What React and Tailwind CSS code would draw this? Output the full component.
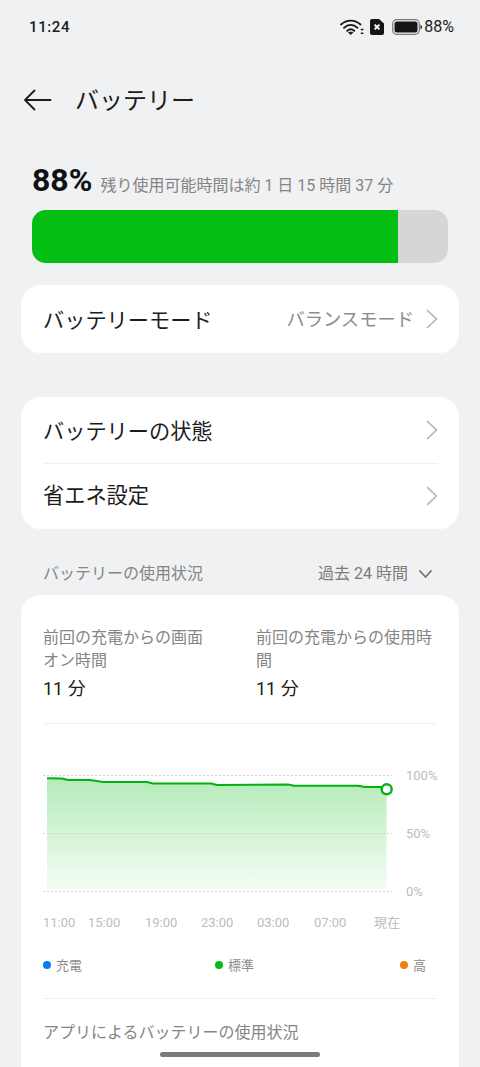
const Chevron = () => (
  <svg className="ml-[1px]" width="12" height="20" viewBox="0 0 12 20" fill="none" stroke="#b4b5b7" strokeWidth="1.7" strokeLinecap="round" strokeLinejoin="round">
    <path d="M1.5 1.5 L10.5 10 L1.5 18.5" />
  </svg>
);

const Dot = ({ color, label, className }) => (
  <div className={`flex items-center gap-[5px] ${className}`}>
    <span className={`w-2 h-2 rounded-full ${color}`} />
    <span className="text-[13px] leading-none text-[#8c8c8c]">{label}</span>
  </div>
);

const linePts = "47,778.3 62,778.5 68,780 90,780 103,782 147,782 153,783.5 211,783.5 217,785 288,784.5 294,785.7 358,785.7 365,787 386.5,787";

export default function App() {
  return (
    <div className="relative w-[480px] h-[1067px] overflow-hidden bg-[#f0f1f3] font-[family-name:Roboto,'Noto_Sans_CJK_JP',sans-serif]">
      {/* status bar */}
      <div className="h-[54px] flex items-center justify-between pl-[29px] pr-[26px]">
        <span className="text-[15px] font-medium text-[#1c1c1c] tracking-[0.6px]">11:24</span>
        <div className="flex items-center">
          <svg width="24" height="18" viewBox="0 0 24 18" fill="none" stroke="#161616" strokeWidth="1.8" strokeLinecap="round">
            <path d="M1 6.5 C6.5 1.2 15 1.2 20.5 6.5" />
            <path d="M4 9.8 C8 6 13.5 6 17.5 9.8" />
            <path d="M7.2 12.8 C9.5 10.8 12 10.8 14.3 12.8" />
            <path d="M8.8 14.6 L10.75 16.6 L12.7 14.6 Z" fill="#161616" strokeWidth="1" />
            <path d="M21.4 11.6 L22.8 11.6 M21.4 15.2 L22.8 15.2" strokeWidth="1.5" />
          </svg>
          <svg className="ml-[6px]" width="14" height="16" viewBox="0 0 14 16">
            <path d="M2 0 H9 L14 4.5 V14 Q14 16 12 16 H2 Q0 16 0 14 V2 Q0 0 2 0 Z" fill="#161616" />
            <path d="M4.6 5.6 L9.4 10.4 M9.4 5.6 L4.6 10.4" stroke="#fff" strokeWidth="2" />
          </svg>
          <svg className="ml-2" width="30" height="16" viewBox="0 0 30 16">
            <rect x="0.7" y="0.7" width="26.6" height="14.6" rx="4" fill="none" stroke="#77787a" strokeWidth="1.2" />
            <rect x="2.5" y="2.5" width="23" height="11" rx="2.5" fill="#161616" />
            <path d="M28.5 5.5 Q30 6.5 30 8 Q30 9.5 28.5 10.5 Z" fill="#161616" />
          </svg>
          <span className="ml-[2px] text-[16px] text-[#1c1c1c]">88%</span>
        </div>
      </div>

      {/* header */}
      <div className="h-[92px] flex items-center pl-[23px]">
        <svg width="29" height="22" viewBox="0 0 29 22" fill="none" stroke="#1c1c1c" strokeWidth="1.8" strokeLinecap="round" strokeLinejoin="round">
          <path d="M27.5 11 H2 M11.5 1.5 L2 11 L11.5 20.5" />
        </svg>
        <span className="ml-[23px] pt-[2px] text-[24px] leading-none text-[#1c1c1c]">バッテリー</span>
      </div>

      {/* level */}
      <div className="h-[64px] flex items-baseline px-8 pt-[14px]">
        <span className="text-[32px] leading-[40px] font-bold text-[#111111]">88%</span>
        <span className="ml-2 text-[16px] text-[#858585]">残り使用可能時間は約 1 日 15 時間 37 分</span>
      </div>
      <div className="mx-8 h-[53px] rounded-[14px] bg-[#d5d6d8] overflow-hidden">
        <div className="w-[366px] h-full bg-[#04be14]" />
      </div>

      {/* battery mode */}
      <div className="mt-[22px] mx-[21px] h-[68px] rounded-[20px] bg-white flex items-center pl-[22px] pr-[21px]">
        <span className="flex-1 pt-[3px] text-[21.2px] text-[#1c1c1c]">バッテリーモード</span>
        <span className="pt-[2px] text-[18.3px] text-[#8c8c8c] mr-[11px]">バランスモード</span>
        <Chevron />
      </div>

      {/* settings */}
      <div className="mt-[44px] mx-[21px] h-[132px] rounded-[20px] bg-white pl-[22px] pr-[21px] flex flex-col">
        <div className="flex-1 flex items-center justify-between border-b border-[#f0f0f1]">
          <span className="pt-[4px] text-[21.2px] text-[#1c1c1c]">バッテリーの状態</span>
          <Chevron />
        </div>
        <div className="flex-1 flex items-center justify-between">
          <span className="text-[21.2px] text-[#1c1c1c]">省エネ設定</span>
          <Chevron />
        </div>
      </div>

      {/* usage heading */}
      <div className="h-[66px] pt-[24px] pl-[43px] pr-[48px] flex items-center justify-between">
        <span className="text-[16px] text-[#858585]">バッテリーの使用状況</span>
        <div className="flex items-center gap-[11px]">
          <span className="text-[16px] text-[#7c7c7c]">過去 24 時間</span>
          <svg width="13" height="8" viewBox="0 0 13 8" fill="none" stroke="#6f6f6f" strokeWidth="1.7" strokeLinecap="round" strokeLinejoin="round">
            <path d="M1 1 L6.5 7 L12 1" />
          </svg>
        </div>
      </div>

      {/* usage card */}
      <div className="mx-[21px] h-[520px] rounded-t-[20px] bg-white px-[22px] pt-[31px]">
        <div className="grid grid-cols-[213px_181px] h-[98px] border-b border-[#f0f0f1]">
          <div className="pr-[40px]">
            <div className="text-[16px] leading-[23px] text-[#858585]">前回の充電からの画面オン時間</div>
            <div className="mt-[3px] text-[18px] leading-[28px] text-[#1c1c1c]">11 分</div>
          </div>
          <div>
            <div className="text-[16px] leading-[23px] text-[#858585]">前回の充電からの使用時間</div>
            <div className="mt-[3px] text-[18px] leading-[28px] text-[#1c1c1c]">11 分</div>
          </div>
        </div>

        {/* chart */}
        <div className="flex h-[181px] pt-[40px]">
          <svg className="shrink-0" width="394" height="141" viewBox="43 764 394 141">
            <defs>
              <linearGradient id="area" x1="0" y1="0" x2="0" y2="1">
                <stop offset="0" stopColor="#04be14" stopOpacity="0.3" />
                <stop offset="1" stopColor="#04be14" stopOpacity="0.04" />
              </linearGradient>
            </defs>
            <polygon points={`${linePts} 386.5,890 47,890`} fill="url(#area)" />
            <g stroke="#d2d3d4" strokeWidth="1" strokeDasharray="2 2">
              <line x1="43" x2="392" y1="775.5" y2="775.5" />
              <line x1="43" x2="392" y1="833.5" y2="833.5" />
              <line x1="43" x2="392" y1="891.5" y2="891.5" />
            </g>
            <polyline points={linePts} fill="none" stroke="#04b012" strokeWidth="2" strokeLinejoin="round" />
            <circle cx="386.7" cy="789.3" r="5" fill="#fff" stroke="#04b012" strokeWidth="2.4" />
          </svg>
          <div className="-ml-[31px] h-[141px] relative text-[13px] leading-none text-[#bdbdbd]">
            <span className="absolute left-0 top-[5px]">100%</span>
            <span className="absolute left-0 top-[63px]">50%</span>
            <span className="absolute left-0 top-[121px]">0%</span>
          </div>
        </div>
        <div className="mt-[11px] h-[14px] flex text-[13px] leading-[14px] text-[#bdbdbd] whitespace-nowrap">
          <span className="w-[45px]">11:00</span>
          <span className="w-[57px]">15:00</span>
          <span className="w-[56px]">19:00</span>
          <span className="w-[56px]">23:00</span>
          <span className="w-[57px]">03:00</span>
          <span className="w-[60px]">07:00</span>
          <span>現在</span>
        </div>

        {/* legend */}
        <div className="mt-[28px] h-[14px] flex items-center">
          <Dot color="bg-[#0a7cf0]" label="充電" className="w-[172px]" />
          <Dot color="bg-[#04be14]" label="標準" className="w-[185px]" />
          <Dot color="bg-[#f57c10]" label="高" />
        </div>

        <div className="mt-[26px] border-t border-[#f0f0f1] pt-[22px]">
          <span className="text-[16px] leading-[24px] text-[#858585]">アプリによるバッテリーの使用状況</span>
        </div>
      </div>

      {/* home indicator */}
      <div className="absolute left-[160px] top-[1052px] w-[160px] h-[5px] rounded-full bg-[#7a7a7a]" />
    </div>
  );
}
